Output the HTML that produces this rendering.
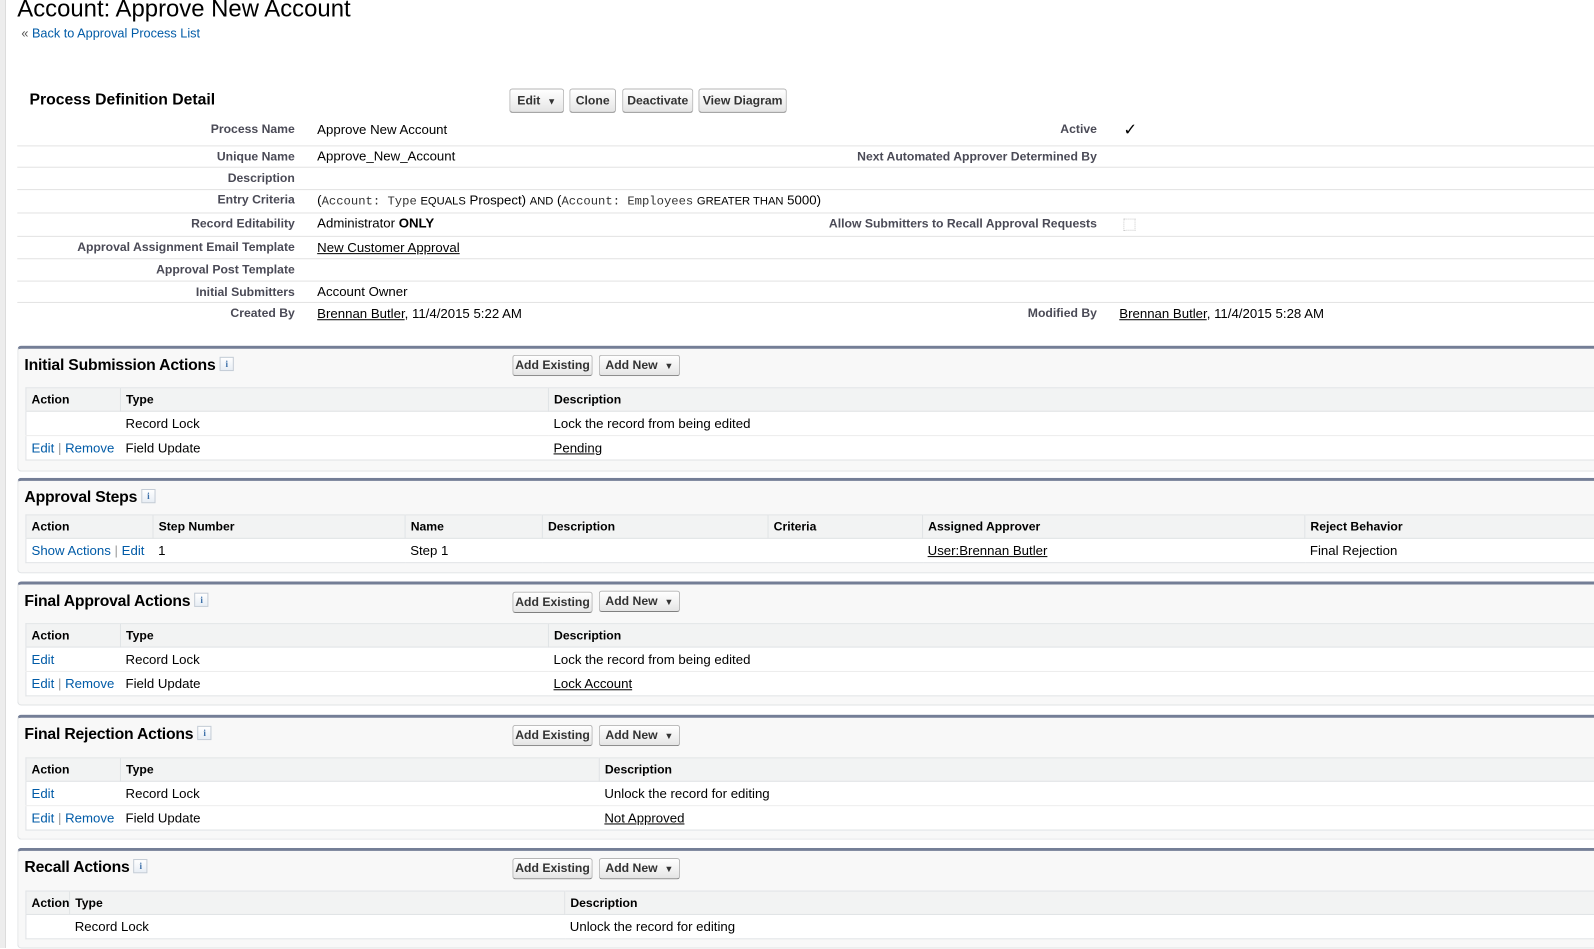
<!DOCTYPE html>
<html><head><meta charset="utf-8"><style>
*{box-sizing:border-box;margin:0;padding:0}
body{width:1594px;height:948px;overflow:hidden;background:#fff;font-family:"Liberation Sans",Arial,sans-serif;color:#000;position:relative}
#w{position:absolute;left:0;top:0;width:1568px;height:933px;transform:scale(1.0166);transform-origin:0 0;overflow:hidden}
.a{position:absolute}
.strip{left:0;top:0;width:6px;height:948px;background:#ededed;border-right:1px solid #dcdcdc}
h1{position:absolute;left:17px;top:-5px;font-size:23.5px;font-weight:normal;white-space:nowrap}
.back{left:21px;top:26px;font-size:12.5px;color:#015ba7}
.back span{color:#555}
.pdd{left:29px;top:90px;font-size:15.5px;font-weight:bold}
.btn{position:absolute;height:24px;border:1px solid #b5b5b5;border-bottom-color:#7f7f7f;border-radius:3px;background:linear-gradient(#fff,#f0f0f0 60%,#e4e4e4);font-size:12px;font-weight:bold;color:#333;line-height:22px;text-align:center;white-space:nowrap}
.lbl{position:absolute;font-size:12px;font-weight:bold;color:#4a4a56;text-align:right;white-space:nowrap}
.val{position:absolute;font-size:13px;white-space:nowrap}
.line{position:absolute;left:17px;right:0;height:1px;background:#e3e3e3}
.u{text-decoration:underline;color:#000}
.mono{font-family:"Liberation Mono",monospace;font-size:12px;color:#333}
.sm{font-size:11px}
.sec{position:absolute;left:17px;right:-6px;background:#f8f8f8;border:1px solid #e0e3e5;border-top:3px solid #747e96;border-radius:4px}
.sec .t{position:absolute;left:6px;top:8px;font-size:15.5px;font-weight:bold;white-space:nowrap;letter-spacing:-0.2px}
.ib{display:inline-block;width:14px;height:14px;border:1px solid #c4ccd6;background:linear-gradient(#fff,#e8eef5);color:#3a6ea8;font-size:9px;font-weight:bold;text-align:center;line-height:12px;vertical-align:3px;margin-left:4px;font-family:"Liberation Serif",serif}
table{position:absolute;left:7px;width:1569px;border-collapse:collapse;background:#fff;border:1px solid #e0e3e5;table-layout:fixed}
th{background:#f2f3f3;font-size:12px;font-weight:bold;text-align:left;height:23px;padding:0 5px;border-right:1px solid #e0e3e5;border-bottom:1px solid #e0e3e5;color:#000;white-space:nowrap}
td{font-size:13px;height:24px;padding:0 5px;border-bottom:1px solid #ededed;white-space:nowrap;vertical-align:middle}
tr:last-child td{border-bottom:none}
.lk{color:#015ba7}
.sep{color:#999}
</style></head><body>
<div class="a strip"></div>
<div id="w">
<h1>Account: Approve New Account</h1>
<div class="a back"><span>«</span> Back to Approval Process List</div>

<div class="a pdd">Process Definition Detail</div>
<div class="btn" style="left:501px;top:87px;width:54px">Edit&nbsp; <span style="font-size:9px">▼</span></div>
<div class="btn" style="left:560px;top:87px;width:46px">Clone</div>
<div class="btn" style="left:612px;top:87px;width:70px">Deactivate</div>
<div class="btn" style="left:687px;top:87px;width:87px">View Diagram</div>

<div class="lbl" style="right:1278px;top:120px">Process Name</div>
<div class="val" style="left:312px;top:120px">Approve New Account</div>
<div class="lbl" style="right:489px;top:120px">Active</div>
<div class="val" style="left:1105px;top:118px;font-size:16px">✓</div>
<div class="line" style="top:143px"></div>
<div class="lbl" style="right:1278px;top:147px">Unique Name</div>
<div class="val" style="left:312px;top:146px">Approve_New_Account</div>
<div class="lbl" style="right:489px;top:147px">Next Automated Approver Determined By</div>
<div class="line" style="top:164px"></div>
<div class="lbl" style="right:1278px;top:168px">Description</div>
<div class="line" style="top:186px"></div>
<div class="lbl" style="right:1278px;top:189px">Entry Criteria</div>
<div class="val" style="left:312px;top:189px">(<span class="mono">Account: Type</span> <span class="sm">EQUALS</span> Prospect) <span class="sm">AND</span> (<span class="mono">Account: Employees</span> <span class="sm">GREATER THAN</span> 5000)</div>
<div class="line" style="top:209px"></div>
<div class="lbl" style="right:1278px;top:213px">Record Editability</div>
<div class="val" style="left:312px;top:212px">Administrator <b>ONLY</b></div>
<div class="lbl" style="right:489px;top:213px">Allow Submitters to Recall Approval Requests</div>
<div class="a" style="left:1105px;top:215px;width:12px;height:12px;border:1px dotted #ccc"></div>
<div class="line" style="top:232px"></div>
<div class="lbl" style="right:1278px;top:236px">Approval Assignment Email Template</div>
<div class="val" style="left:312px;top:236px"><span class="u">New Customer Approval</span></div>
<div class="line" style="top:254px"></div>
<div class="lbl" style="right:1278px;top:258px">Approval Post Template</div>
<div class="line" style="top:276px"></div>
<div class="lbl" style="right:1278px;top:280px">Initial Submitters</div>
<div class="val" style="left:312px;top:279px">Account Owner</div>
<div class="line" style="top:297px"></div>
<div class="lbl" style="right:1278px;top:301px">Created By</div>
<div class="val" style="left:312px;top:301px"><span class="u">Brennan Butler</span>, 11/4/2015 5:22 AM</div>
<div class="lbl" style="right:489px;top:301px">Modified By</div>
<div class="val" style="left:1101px;top:301px"><span class="u">Brennan Butler</span>, 11/4/2015 5:28 AM</div>

<div class="sec" style="top:340px;height:124px">
<div class="t">Initial Submission Actions<span class="ib">i</span></div>
<div class="btn" style="left:486px;top:6px;width:79px;height:21px;line-height:19px">Add Existing</div>
<div class="btn" style="left:571px;top:6px;width:80px;height:21px;line-height:19px">Add New&nbsp; <span style="font-size:9px">▼</span></div>
<table style="top:38px"><colgroup><col style="width:93px"><col style="width:421px"><col></colgroup>
<tr><th>Action</th><th>Type</th><th>Description</th></tr>
<tr><td></td><td>Record Lock</td><td>Lock the record from being edited</td></tr>
<tr><td><span class="lk">Edit</span> <span class="sep">|</span> <span class="lk">Remove</span></td><td>Field Update</td><td><span class="u">Pending</span></td></tr>
</table></div>

<div class="sec" style="top:470px;height:94px">
<div class="t">Approval Steps<span class="ib">i</span></div>
<table style="top:33px"><colgroup><col style="width:125px"><col style="width:248px"><col style="width:135px"><col style="width:222px"><col style="width:152px"><col style="width:376px"><col></colgroup>
<tr><th>Action</th><th>Step Number</th><th>Name</th><th>Description</th><th>Criteria</th><th>Assigned Approver</th><th>Reject Behavior</th></tr>
<tr><td><span class="lk">Show Actions</span> <span class="sep">|</span> <span class="lk">Edit</span></td><td>1</td><td>Step 1</td><td></td><td></td><td><span class="u">User:Brennan Butler</span></td><td>Final Rejection</td></tr>
</table></div>

<div class="sec" style="top:572px;height:122px">
<div class="t">Final Approval Actions<span class="ib">i</span></div>
<div class="btn" style="left:486px;top:7px;width:79px;height:21px;line-height:19px">Add Existing</div>
<div class="btn" style="left:571px;top:6px;width:80px;height:21px;line-height:19px">Add New&nbsp; <span style="font-size:9px">▼</span></div>
<table style="top:38px"><colgroup><col style="width:93px"><col style="width:421px"><col></colgroup>
<tr><th>Action</th><th>Type</th><th>Description</th></tr>
<tr><td><span class="lk">Edit</span></td><td>Record Lock</td><td>Lock the record from being edited</td></tr>
<tr><td><span class="lk">Edit</span> <span class="sep">|</span> <span class="lk">Remove</span></td><td>Field Update</td><td><span class="u">Lock Account</span></td></tr>
</table></div>

<div class="sec" style="top:703px;height:123px">
<div class="t">Final Rejection Actions<span class="ib">i</span></div>
<div class="btn" style="left:486px;top:7px;width:79px;height:21px;line-height:19px">Add Existing</div>
<div class="btn" style="left:571px;top:7px;width:80px;height:21px;line-height:19px">Add New&nbsp; <span style="font-size:9px">▼</span></div>
<table style="top:39px"><colgroup><col style="width:93px"><col style="width:471px"><col></colgroup>
<tr><th>Action</th><th>Type</th><th>Description</th></tr>
<tr><td><span class="lk">Edit</span></td><td>Record Lock</td><td>Unlock the record for editing</td></tr>
<tr><td><span class="lk">Edit</span> <span class="sep">|</span> <span class="lk">Remove</span></td><td>Field Update</td><td><span class="u">Not Approved</span></td></tr>
</table></div>

<div class="sec" style="top:834px;height:99px">
<div class="t">Recall Actions<span class="ib">i</span></div>
<div class="btn" style="left:486px;top:7px;width:79px;height:21px;line-height:19px">Add Existing</div>
<div class="btn" style="left:571px;top:7px;width:80px;height:21px;line-height:19px">Add New&nbsp; <span style="font-size:9px">▼</span></div>
<table style="top:39px"><colgroup><col style="width:43px"><col style="width:487px"><col></colgroup>
<tr><th>Action</th><th>Type</th><th>Description</th></tr>
<tr><td></td><td>Record Lock</td><td>Unlock the record for editing</td></tr>
</table></div>
</div>
</body></html>
